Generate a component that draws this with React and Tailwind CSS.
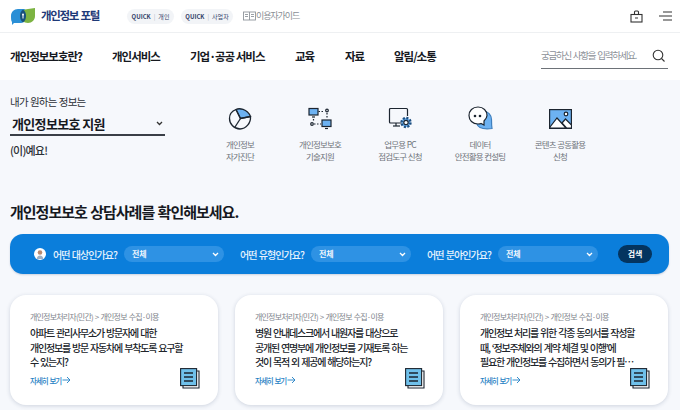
import React from 'react'

const font = { fontFamily: '"Noto Sans CJK KR", "Noto Sans", sans-serif' }

const Logo = () => (
  <svg width="26" height="18" viewBox="0 0 26 18">
    <path d="M1 9c0-4 3-7 7-7h6c1 0 2 1 2 2v7c0 3-3 5-6 5H4l-2 2v-3c-1-1-1-4-1-6z" fill="#2a8fd6" />
    <path d="M25 1v8c0 4-3 7-7 7s-8-3-8-7 4-7 8-7z" fill="#7cb342" />
    <path d="M10 9c0-3 1-5 3-6.500 2 1.500 3 3.500 3 6.500s-1 5-3 6.500c-2-1.500-3-3.500-3-6.500z" fill="#17507e" />
    <circle cx="13" cy="7.500" r="1" fill="#fff" />
    <rect x="12.500" y="8" width="1" height="3.500" fill="#fff" />
  </svg>
)

const PieIcon = () => (
  <svg width="24" height="24" viewBox="0 0 24 24" fill="none" stroke="#1c2530" strokeWidth="1.300">
    <path d="M8 2.500C11 1 19 1.500 22.500 9.500L12.500 11.500z" fill="#6db2f2" />
    <path d="M8 2.500L12.500 11.500L22.500 9.500C23 16 18 22 12 22C6 22 1.500 17 1.500 11.500C1.500 7.500 4 4 8 2.500z" />
    <path d="M12.500 11.500L7 20" />
  </svg>
)

const NetIcon = () => (
  <svg width="24" height="24" viewBox="0 0 24 24" fill="none" stroke="#1c2530" strokeWidth="1.200">
    <rect x="1" y="1.500" width="9" height="6.500" fill="#6db2f2" />
    <path d="M4 10h3" />
    <rect x="14" y="13" width="9" height="6.500" fill="#6db2f2" />
    <path d="M17 21.500h3" />
    <circle cx="19" cy="3.500" r="1.300" />
    <circle cx="4" cy="17" r="1.300" />
    <path d="M10.500 4.500h6M19 6v6M5.500 12v3M6 17h7" strokeDasharray="1.500 1.500" />
  </svg>
)

const PcIcon = () => (
  <svg width="24" height="24" viewBox="0 0 24 24" fill="none" stroke="#1c2530" strokeWidth="1.200">
    <path d="M15 16H2.500a1 1 0 0 1-1-1V2.500a1 1 0 0 1 1-1h16a1 1 0 0 1 1 1V9" />
    <path d="M5 19h7" />
    <path d="M8 16v3" />
    <circle cx="18" cy="15.500" r="4.500" fill="#6db2f2" strokeWidth="2.400" strokeDasharray="2 1.500" stroke="#1c4e80" />
    <circle cx="18" cy="15.500" r="2.200" fill="#fff" />
  </svg>
)

const ChatIcon = () => (
  <svg width="25" height="25" viewBox="0 0 25 25" fill="none" stroke="#1c2530" strokeWidth="1.200">
    <path d="M15 5c5 0 8.500 4 8.500 8.500 0 3 0 6 .5 9-4 .5-9 .5-12-1-3-1.500-4-5-3-9z" fill="#6db2f2" stroke="#3f7fbd" />
    <path d="M10 1C4.500 1 1 4.800 1 9.500s3.500 8.500 9 8.500c1 0 2 0 3-.5l3 1.500v-4c1.500-1.500 3-3 3-5.500C19 4.800 15.500 1 10 1z" fill="#fff" />
    <circle cx="7" cy="10" r="1.300" fill="#1c2530" stroke="none" />
    <circle cx="12" cy="10" r="1.300" fill="#1c2530" stroke="none" />
  </svg>
)

const ImageIcon = () => (
  <svg width="23" height="20" viewBox="0 0 23 20" fill="none" stroke="#1c2530" strokeWidth="1.200">
    <rect x="0.600" y="0.600" width="21.800" height="18.800" fill="#6db2f2" />
    <path d="M1 18l7-9 9 10H1z" fill="#fff" />
    <path d="M13 14l3.500-4 6 6v3h-5z" fill="#fff" />
    <circle cx="17" cy="5" r="1.800" fill="#fff" />
  </svg>
)

const DocIcon = () => (
  <svg width="20" height="21" viewBox="0 0 20 21" fill="none" stroke="#1c2530" strokeWidth="1.100">
    <path d="M17 3h2v17H3v-2" />
    <rect x="0.600" y="0.600" width="16" height="17" fill="#6fc0ea" />
    <path d="M4 5h9M4 9h9M4 13h9" strokeWidth="1.300" />
  </svg>
)

const Chevron = ({ color = '#fff' }) => (
  <svg width="7" height="5" viewBox="0 0 7 5" fill="none" stroke={color} strokeWidth="1.300">
    <path d="M1 1l2.500 2.500L6 1" />
  </svg>
)

const Quick = ({ label, width }) => (
  <div className={`flex h-[15px] items-center justify-center gap-[3px] rounded-full bg-[#f2f4f7] text-[6px] text-[#33426a] ${width}`}>
    <span className="font-bold">QUICK</span>
    <span className="text-[#b0b6c2]">|</span>
    <span>{label}</span>
  </div>
)

const Filter = ({ label, avatar }) => (
  <div className="flex items-center">
    {avatar && (
      <svg className="mr-[7px] shrink-0" width="12" height="12" viewBox="0 0 12 12">
        <circle cx="6" cy="6" r="6" fill="#fff" />
        <circle cx="6" cy="4.500" r="2.300" fill="#b98a70" />
        <path d="M2.500 11c.5-2.500 2-3.500 3.500-3.500s3 1 3.500 3.500z" fill="#9fb0c4" />
      </svg>
    )}
    <span className="w-[71px] whitespace-nowrap text-[10px] font-medium tracking-[-0.95px] [word-spacing:1px] text-[#e8f3fd]">{label}</span>
    <div className="flex h-[16px] w-[100px] items-center justify-between rounded-full bg-[#2e92e4] pl-2 pr-[5px] text-[8px] font-bold text-[#eef6fd]">
      <span>전체</span>
      <Chevron />
    </div>
  </div>
)

const services = [
  { icon: <PieIcon />, lines: ['개인정보', '자가진단'] },
  { icon: <NetIcon />, lines: ['개인정보보호', '기술지원'] },
  { icon: <PcIcon />, lines: ['업무용 PC', '점검도구 신청'] },
  { icon: <ChatIcon />, lines: ['데이터', '안전활용 컨설팅'] },
  { icon: <ImageIcon />, lines: ['콘텐츠 공동활용', '신청'] },
]

const cases = [
  ['아파트 관리사무소가 방문자에 대한', '개인정보를 방문 자동차에 부착도록 요구할', '수 있는지?'],
  ['병원 안내데스크에서 내원자를 대상으로', '공개된 연명부에 개인정보를 기재토록 하는', '것이 목적 외 제공에 해당하는지?'],
  ['개인정보 처리를 위한 각종 동의서를 작성할', '때, ‘정보주체와의 계약 체결 및 이행’에', '필요한 개인정보를 수집하면서 동의가 필…'],
]

export default function App() {
  return (
    <div className="h-[410px] w-[680px] overflow-hidden bg-[#f6f8fc]" style={font}>
      <header className="bg-white">
        <div className="flex h-[33px] items-center border-b border-[#eef0f2] pl-[10px] pr-[8px]">
          <Logo />
          <span className="ml-[5px] w-[86px] text-[11.500px] font-bold tracking-[-1.3px] [word-spacing:1px] text-[#1f3a78]">개인정보 포털</span>
          <Quick label="개인" width="w-[47px]" />
          <div className="w-[7px]" />
          <Quick label="사업자" width="w-[52px]" />
          <svg className="ml-[10px]" width="13" height="10" viewBox="0 0 13 10" fill="none" stroke="#8f949b" strokeWidth="0.900">
            <rect x="0.500" y="1" width="12" height="8" />
            <path d="M6.500 1v8M2 3.500h3M2 5.500h3M8 3.500h3M8 5.500h3" />
          </svg>
          <span className="text-[9px] tracking-[-1.1px] text-[#8a8f96]">이용자가이드</span>
          <div className="flex-1" />
          <svg width="13" height="13" viewBox="0 0 13 13" fill="none" stroke="#333" strokeWidth="1.100">
            <rect x="1" y="4.500" width="11" height="7.500" />
            <path d="M4.500 4.500V2a1 1 0 0 1 1-1h2a1 1 0 0 1 1 1v2.500M5 8h3" />
          </svg>
          <svg className="ml-[16px]" width="13" height="10" viewBox="0 0 13 10" fill="none" stroke="#333" strokeWidth="1.100">
            <path d="M4 1h9M0 5h13M4 9h9" />
          </svg>
        </div>
        <nav className="flex h-[47px] items-center pl-[10px] pr-[12px] text-[11.500px] font-bold tracking-[-1px] text-[#16191f]">
          <span className="w-[102px]">개인정보보호란?</span>
          <span className="w-[78px]">개인서비스</span>
          <span className="w-[105px]">기업·공공 서비스</span>
          <span className="w-[50px]">교육</span>
          <span className="w-[49px]">자료</span>
          <span className="w-[147px]">알림/소통</span>
          <div className="-mt-[1px] flex h-[25px] w-[127px] items-center justify-between border-b border-[#6d7278] pr-[3px] text-[9.500px] font-normal tracking-[-1.25px] [word-spacing:1px] text-[#8b9097]">
            <span>궁금하신 사항을 입력하세요.</span>
            <svg width="13" height="13" viewBox="0 0 13 13" fill="none" stroke="#333" strokeWidth="1.100">
              <circle cx="6" cy="6" r="4.800" />
              <path d="M9.500 9.500l3 3" />
            </svg>
          </div>
        </nav>
      </header>

      <main className="px-[10px]">
        <section className="flex h-[97px]">
          <div className="w-[155px] pt-[14px]">
            <p className="text-[10.500px] leading-[16px] tracking-[-0.75px] [word-spacing:0.500px] text-[#2b2f36]">내가 원하는 정보는</p>
            <div className="mt-[3px] flex h-[23px] items-center justify-between border-b-2 border-[#3a3f47] px-[2px]">
              <span className="text-[13px] font-bold tracking-[-0.65px] text-[#16191f]">개인정보보호 지원</span>
              <Chevron color="#333" />
            </div>
            <p className="mt-[6px] text-[11px] font-medium tracking-[-0.8px] text-[#2b2f36]">(이)예요!</p>
          </div>
          <div className="ml-[35px] flex pt-[26px]">
            {services.map((s) => (
              <div key={s.lines[0]} className="flex w-[80px] flex-col items-center">
                <div className="flex h-[25px] items-center">{s.icon}</div>
                <div className="mt-[7px] text-center text-[8.500px] leading-[12px] tracking-[-0.85px] [word-spacing:0.500px] text-[#6f747b]">
                  {s.lines.map((line) => <p key={line}>{line}</p>)}
                </div>
              </div>
            ))}
          </div>
        </section>

        <h2 className="mt-[24px] text-[15px] font-bold leading-[22px] tracking-[-1px] [word-spacing:1px] text-[#16191f]">개인정보보호 상담사례를 확인해보세요.</h2>

        <section className="mt-[11px] flex h-[40px] w-[659px] items-center gap-[16px] rounded-[13px] bg-[#0b7edb] pl-[24px] pr-[17px] shadow-[0_1px_2px_rgba(30,60,110,0.2)]">
          <Filter label="어떤 대상인가요?" avatar />
          <Filter label="어떤 유형인가요?" />
          <Filter label="어떤 분야인가요?" />
          <div className="ml-auto flex h-[18px] w-[34px] shrink-0 items-center justify-center rounded-full bg-[#04345f] text-[8px] font-bold text-white">검색</div>
        </section>

        <section className="mt-[21px] flex w-[659px] gap-[17px]">
          {cases.map((lines) => (
            <article key={lines[0]} className="relative h-[110px] w-[208px] shrink-0 rounded-[16px] bg-white pl-[20px] pt-[15px] shadow-[0_1px_4px_rgba(30,50,90,0.18)]">
              <p className="text-[8px] leading-[14px] tracking-[-0.8px] [word-spacing:1px] text-[#80858c]">개인정보처리자(민간) &gt; 개인정보 수집·이용</p>
              <div className="mt-[2px] text-[10px] font-medium leading-[14.500px] tracking-[-1.2px] [word-spacing:1px] text-[#20242a]">
                {lines.map((line) => <p key={line} className="whitespace-nowrap">{line}</p>)}
              </div>
              <div className="mt-[5px] flex items-center gap-[1px] text-[7.500px] font-medium tracking-[-1px] [word-spacing:1px] text-[#1f7fc4]">
                자세히 보기
                <svg width="9" height="8" viewBox="0 0 9 8" fill="none" stroke="#1f7fc4" strokeWidth="0.900">
                  <path d="M0.500 4h7.500M5 1l3 3-3 3" />
                </svg>
              </div>
              <div className="absolute bottom-[16px] right-[18px]">
                <DocIcon />
              </div>
            </article>
          ))}
        </section>
      </main>
    </div>
  )
}
